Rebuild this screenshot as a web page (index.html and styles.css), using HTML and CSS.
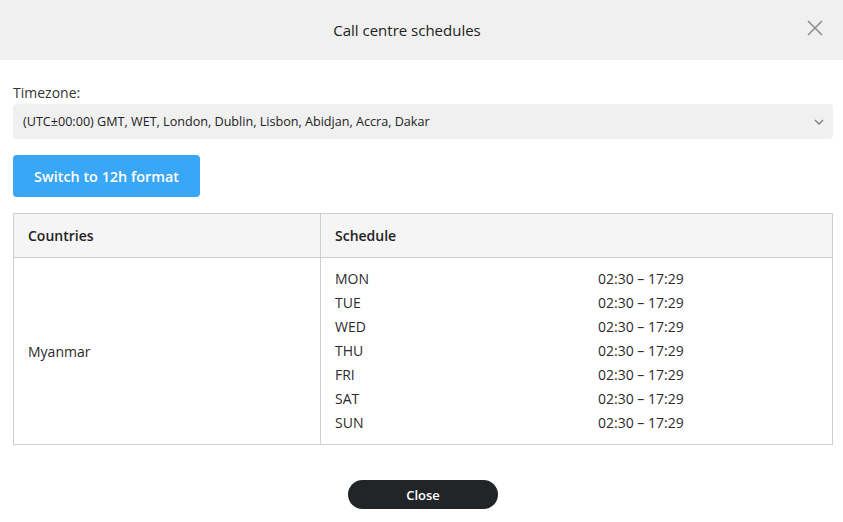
FILE: index.html
```html
<!DOCTYPE html>
<html lang="en">
<head>
<meta charset="utf-8">
<title>Call centre schedules</title>
<link rel="stylesheet" href="styles.css">
</head>
<body>
<div class="modal">
  <header class="modal-header">
    <h1 class="modal-title">Call centre schedules</h1>
    <button class="close-x" aria-label="Close">
      <svg width="16" height="16" viewBox="0 0 16 16"><path d="M1 1 L15 15 M15 1 L1 15" stroke="#8a8a8a" stroke-width="1.5" fill="none"/></svg>
    </button>
  </header>
  <main class="modal-body">
    <label class="field-label">Timezone:</label>
    <div class="select">
      <span class="select-text">(UTC±00:00) GMT, WET, London, Dublin, Lisbon, Abidjan, Accra, Dakar</span>
      <svg class="chevron" width="10" height="6" viewBox="0 0 10 6"><path d="M1 1 L5 5 L9 1" stroke="#6f7d8c" stroke-width="1.3" fill="none"/></svg>
    </div>
    <button class="btn-primary">Switch to 12h format</button>
    <table class="schedule-table">
      <thead>
        <tr><th class="col-country">Countries</th><th>Schedule</th></tr>
      </thead>
      <tbody>
        <tr>
          <td class="col-country">Myanmar</td>
          <td class="schedule-cell">
            <div class="day-row"><span class="day">MON</span><span class="time">02:30 – 17:29</span></div>
            <div class="day-row"><span class="day">TUE</span><span class="time">02:30 – 17:29</span></div>
            <div class="day-row"><span class="day">WED</span><span class="time">02:30 – 17:29</span></div>
            <div class="day-row"><span class="day">THU</span><span class="time">02:30 – 17:29</span></div>
            <div class="day-row"><span class="day">FRI</span><span class="time">02:30 – 17:29</span></div>
            <div class="day-row"><span class="day">SAT</span><span class="time">02:30 – 17:29</span></div>
            <div class="day-row"><span class="day">SUN</span><span class="time">02:30 – 17:29</span></div>
          </td>
        </tr>
      </tbody>
    </table>
    <div class="footer">
      <button class="btn-dark">Close</button>
    </div>
  </main>
</div>
</body>
</html>
```
FILE: styles.css
```css
* { box-sizing: border-box; }
html, body { margin: 0; padding: 0; background: #fff; }
body { font-family: "Open Sans", "Noto Sans", sans-serif; color: #2b2b2b; }

.modal-header {
  height: 60px;
  background: #f0f0f0;
  display: flex;
  align-items: center;
  justify-content: center;
  padding-right: 29px;
  position: relative;
}
.modal-title { margin: 0; font-size: 15px; font-weight: 400; color: #222; }
.close-x {
  position: absolute;
  right: 20px;
  top: 20px;
  width: 16px; height: 16px;
  padding: 0; border: 0; background: none;
  display: block;
}
.close-x svg { display: block; }

.modal-body { padding: 24px 10px 0 13px; }
.field-label { display: block; font-size: 14px; line-height: 18px; color: #333; margin-bottom: 2px; }

.select {
  height: 35px;
  background: #f0f0f0;
  border-radius: 4px;
  display: flex;
  align-items: center;
  justify-content: space-between;
  padding: 0 9px 0 10px;
}
.select-text { font-size: 12.6px; color: #222; }
.chevron { display: block; }

.btn-primary {
  margin-top: 16px;
  height: 42px;
  width: 187px;
  border: 0;
  border-radius: 4px;
  background: #3aa6f6;
  color: #fff;
  font-family: inherit;
  font-size: 14.4px;
  font-weight: 600;
  display: block;
}

.schedule-table {
  margin-top: 16px;
  width: 100%;
  border-collapse: collapse;
  font-size: 14px;
}
.schedule-table th, .schedule-table td {
  border: 1px solid #cfcfcf;
  text-align: left;
  padding: 0 14px;
}
.schedule-table th {
  height: 44px;
  background: #f5f5f5;
  font-weight: 600;
  color: #222;
}
.col-country { width: 307px; }
.schedule-cell { padding: 9px 14px !important; }
.day-row { display: flex; line-height: 24px; }
.day { width: 263px; }

.footer { display: flex; justify-content: center; margin-top: 35px; }
.btn-dark {
  width: 150px;
  height: 29px;
  border: 0;
  border-radius: 15px;
  background: #222528;
  color: #fff;
  font-family: inherit;
  font-size: 13px;
  font-weight: 600;
}
```
